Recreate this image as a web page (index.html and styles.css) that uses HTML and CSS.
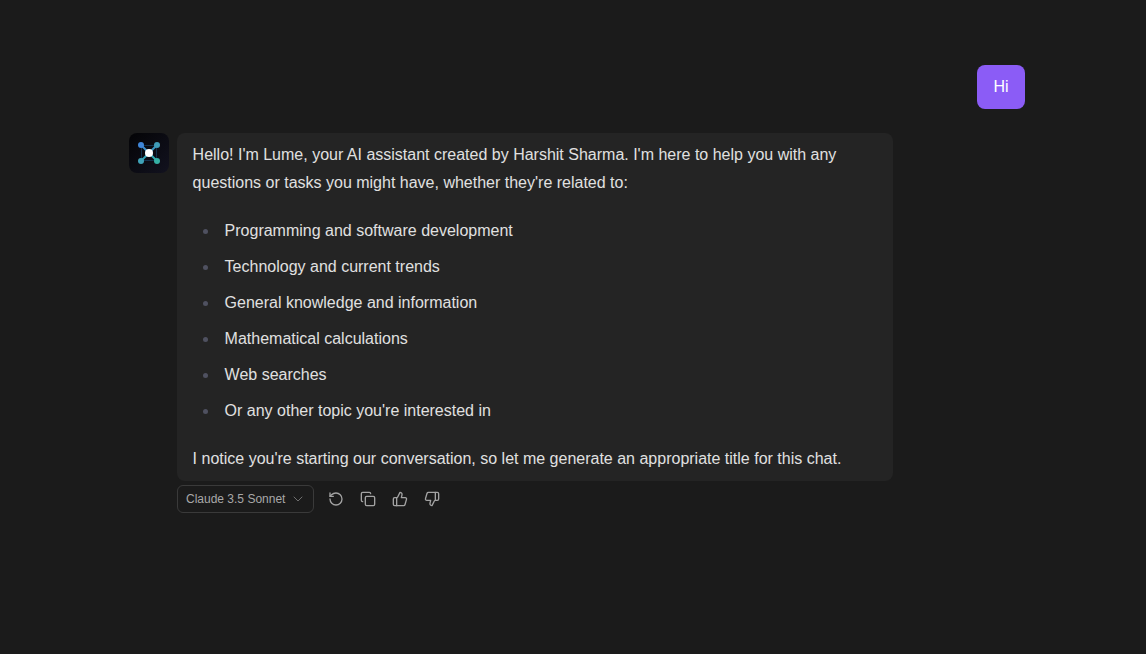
FILE: index.html
```html
<!DOCTYPE html>
<html>
<head>
<meta charset="utf-8">
<link rel="stylesheet" href="styles.css">
<title>Lume</title>
</head>
<body>
  <div class="chat">
    <div class="user_row">
      <div class="user_bubble">Hi</div>
    </div>

    <div class="bot_row">
      <div class="avatar">
        <svg width="40" height="40" viewBox="0 0 40 40">
          <defs>
            <linearGradient id="line_a" gradientUnits="userSpaceOnUse" x1="12" y1="12" x2="28" y2="28">
              <stop offset="0" stop-color="#3b82d6"/>
              <stop offset="1" stop-color="#2fb5a8"/>
            </linearGradient>
            <linearGradient id="line_b" gradientUnits="userSpaceOnUse" x1="28" y1="12" x2="12" y2="28">
              <stop offset="0" stop-color="#3b8fc8"/>
              <stop offset="1" stop-color="#2fa8b0"/>
            </linearGradient>
          </defs>
          <rect x="12.5" y="12.5" width="15" height="15" fill="none" stroke="#14304a" stroke-width="1"/>
          <path d="M12 12L28 28" stroke="url(#line_a)" stroke-width="2"/>
          <path d="M28 12L12 28" stroke="url(#line_b)" stroke-width="2"/>
          <circle cx="12" cy="12" r="3" fill="#3f86d8"/>
          <circle cx="28" cy="12" r="3" fill="#3f9cb8"/>
          <circle cx="12" cy="28" r="3" fill="#3fa2b8"/>
          <circle cx="28" cy="28" r="3" fill="#35b0a5"/>
          <circle cx="20" cy="20" r="4" fill="#ffffff"/>
        </svg>
      </div>
      <div class="bot_column">
        <div class="bot_bubble">
          <p>Hello! I'm Lume, your AI assistant created by Harshit Sharma. I'm here to help you with any questions or tasks you might have, whether they're related to:</p>
          <ul>
            <li>Programming and software development</li>
            <li>Technology and current trends</li>
            <li>General knowledge and information</li>
            <li>Mathematical calculations</li>
            <li>Web searches</li>
            <li>Or any other topic you're interested in</li>
          </ul>
          <p>I notice you're starting our conversation, so let me generate an appropriate title for this chat.</p>
        </div>
        <div class="actions">
          <button type="button" class="model_select">
            Claude 3.5 Sonnet
            <svg class="chevron" width="16" height="16" viewBox="0 0 24 24"><path d="M6 9l6 6 6-6"/></svg>
          </button>
          <div class="icon_buttons">
            <button type="button" class="icon_button">
              <svg width="16" height="16" viewBox="0 0 24 24"><path d="M3 12a9 9 0 1 0 9-9 9.75 9.75 0 0 0-6.74 2.74L3 8"/><path d="M3 3v5h5"/></svg>
            </button>
            <button type="button" class="icon_button">
              <svg width="16" height="16" viewBox="0 0 24 24"><rect x="8" y="8" width="14" height="14" rx="2"/><path d="M4 16c-1.1 0-2-.9-2-2V4c0-1.1.9-2 2-2h10c1.1 0 2 .9 2 2"/></svg>
            </button>
            <button type="button" class="icon_button">
              <svg width="16" height="16" viewBox="0 0 24 24"><path d="M7 10v12"/><path d="M15 5.88 14 10h5.83a2 2 0 0 1 1.92 2.56l-2.33 8A2 2 0 0 1 17.5 22H4a2 2 0 0 1-2-2v-8a2 2 0 0 1 2-2h2.76a2 2 0 0 0 1.79-1.11L12 2a3.13 3.13 0 0 1 3 3.88Z"/></svg>
            </button>
            <button type="button" class="icon_button">
              <svg width="16" height="16" viewBox="0 0 24 24"><path d="M17 14V2"/><path d="M9 18.12 10 14H4.17a2 2 0 0 1-1.92-2.56l2.33-8A2 2 0 0 1 6.5 2H20a2 2 0 0 1 2 2v8a2 2 0 0 1-2 2h-2.76a2 2 0 0 0-1.79 1.11L12 22a3.13 3.13 0 0 1-3-3.88Z"/></svg>
            </button>
          </div>
        </div>
      </div>
    </div>
  </div>
</body>
</html>
```

FILE: styles.css
```css
html, body {
  height: 100%;
}

body {
  margin: 0;
  background-color: #1b1b1b;
  color: #e0e0e0;
  font-family: "Liberation Sans", Arial, sans-serif;
  font-size: 16px;
  overflow: hidden;
}

.chat {
  box-sizing: border-box;
  width: 1025px;
  padding: 65px 0 0 129px;
}

.user_row {
  display: flex;
  justify-content: flex-end;
  margin-bottom: 24px;
}

.user_bubble {
  background-color: #8b5cf6;
  color: white;
  border-radius: 8px;
  padding: 8px 16.5px;
  line-height: 28px;
}

.bot_row {
  display: flex;
  gap: 8px;
}

.avatar {
  width: 40px;
  height: 40px;
  border-radius: 8px;
  background: linear-gradient(135deg, #040406, #12121f);
  flex-shrink: 0;
}

.avatar svg {
  display: block;
}

.bot_column {
  width: 716px;
}

.bot_bubble {
  background-color: #242424;
  border-radius: 8px;
  padding: 8px 16px 8px 15.6px;
  line-height: 28px;
}

.bot_bubble p {
  margin: 0;
}

.bot_bubble ul {
  margin: 20px 0;
  padding-left: 10px;
  list-style: none;
}

.bot_bubble li {
  display: flex;
  align-items: center;
  margin-bottom: 8px;
}

.bot_bubble li:last-child {
  margin-bottom: 0;
}

.bot_bubble li::before {
  content: "";
  width: 5px;
  height: 5px;
  margin-right: 17px;
  border-radius: 50%;
  background-color: #4f5160;
}

.actions {
  display: flex;
  align-items: center;
  gap: 6px;
  margin-top: 4px;
}

.model_select {
  display: flex;
  align-items: center;
  gap: 5px;
  box-sizing: border-box;
  width: 137px;
  height: 28px;
  padding: 0 8px;
  background: transparent;
  border: 1px solid #3a3a3a;
  border-radius: 6px;
  color: #a8a8a8;
  font-family: inherit;
  font-size: 12px;
  white-space: nowrap;
}

.chevron {
  flex-shrink: 0;
}

.chevron path, .icon_button svg path, .icon_button svg rect {
  fill: none;
  stroke-width: 2;
  stroke-linecap: round;
  stroke-linejoin: round;
}

.chevron path {
  stroke: #6f6f6f;
  stroke-width: 1.5;
}

.icon_button svg path, .icon_button svg rect {
  stroke: #a3a3a3;
}

.icon_buttons {
  display: flex;
}

.icon_button {
  display: flex;
  align-items: center;
  justify-content: center;
  width: 32px;
  height: 28px;
  padding: 0;
  background: transparent;
  border: none;
}
```
